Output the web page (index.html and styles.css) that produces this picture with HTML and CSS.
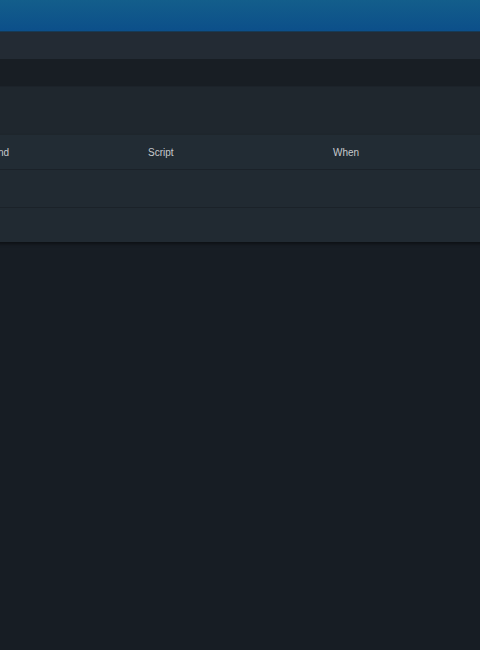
FILE: index.html
```html
<!DOCTYPE html>
<html lang="en">
<head>
  <meta charset="UTF-8">
  <meta name="viewport" content="width=device-width, initial-scale=1.0">
  <title>Scripts</title>
  <link rel="stylesheet" href="styles.css">
</head>
<body>
  <!-- 顶部栏 -->
  <header class="topbar"></header>
  <!-- 工具栏 -->
  <div class="toolbar"></div>
  <div class="tabs"></div>
  <div class="filter"></div>
  <!-- 表格 -->
  <div class="panel">
    <table class="grid">
      <thead>
        <tr>
          <th>Command</th>
          <th>Script</th>
          <th>When</th>
        </tr>
      </thead>
      <tbody>
        <tr><td></td><td></td><td></td></tr>
        <tr><td></td><td></td><td></td></tr>
      </tbody>
    </table>
  </div>
</body>
</html>
```
FILE: styles.css
```css
/* 重置样式 */
* {
  margin: 0;
  padding: 0;
  box-sizing: border-box;
}
html, body {
  height: 100%;
}
body {
  background-color: #171d24;
  font-family: "Liberation Sans", Arial, sans-serif;
  overflow: hidden;
}
/* 顶部栏 */
.topbar {
  height: 32px;
  background: linear-gradient(#135e8b, #0c4f8a);
  border-bottom: 1px solid #163a55;
}
.toolbar {
  height: 27px;
  background-color: #232b34;
}
.tabs {
  height: 28px;
  background-color: #181e24;
  border-bottom: 1px solid #1c232a;
}
.filter {
  height: 48px;
  background-color: #1f272e;
}
/* 表格 */
.panel {
  margin-left: -45px;
  width: 555px;
  box-shadow: 0 2px 3px rgba(0, 0, 0, 0.45);
}
.grid {
  width: 100%;
  border-collapse: collapse;
  table-layout: fixed;
  background-color: #212a32;
}
.grid th, .grid td {
  width: 185px;
  padding: 0 8px;
  text-align: left;
  border-bottom: 1px solid #1b2229;
}
.grid th {
  height: 34px;
  padding-top: 2px;
  font-size: 10px;
  font-weight: normal;
  color: #c6cacd;
  background-color: #222c34;
}
.grid td {
  height: 38px;
}
.grid tbody tr:last-child td {
  height: 35px;
  border-bottom: 0;
}
```
